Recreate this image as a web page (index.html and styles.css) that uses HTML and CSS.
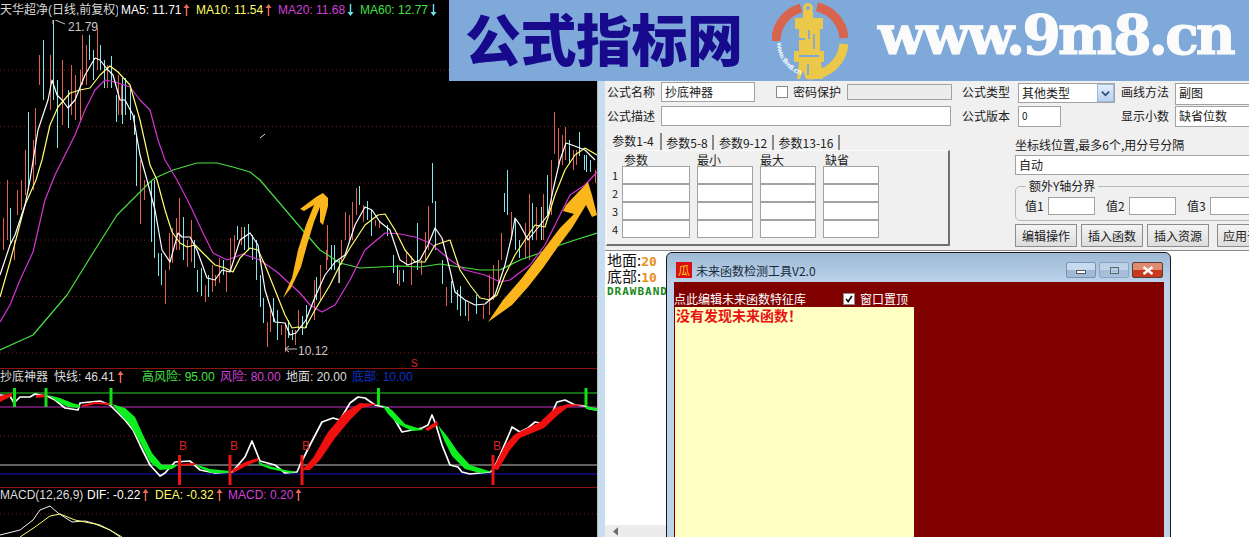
FILE: index.html
```html
<!DOCTYPE html>
<html lang="zh">
<head>
<meta charset="utf-8">
<title>公式指标网</title>
<link rel="stylesheet" href="styles.css">
</head>
<body>
<div class="screen">
  <section class="chart">
    <div class="panel panel-main">
      <div class="legend legend-main">
        <span class="lg w118">天华超净(日线,前复权)</span>
        <span class="lg c-white ml3 w75">MA5: 11.71<svg class="ar" viewBox="0 0 7 12"><path class="up" d="M3.5 0 6.5 4H4.2V12H2.8V4H.5Z"/></svg></span>
        <span class="lg c-yellow w82">MA10: 11.54<svg class="ar" viewBox="0 0 7 12"><path class="up" d="M3.5 0 6.5 4H4.2V12H2.8V4H.5Z"/></svg></span>
        <span class="lg c-magenta w82">MA20: 11.68<svg class="ar dn" viewBox="0 0 7 12"><path class="down" d="M3.5 12 6.5 8H4.2V0H2.8V8H.5Z"/></svg></span>
        <span class="lg c-green">MA60: 12.77<svg class="ar dn" viewBox="0 0 7 12"><path class="down" d="M3.5 12 6.5 8H4.2V0H2.8V8H.5Z"/></svg></span>
      </div>
      <svg class="plot plot-main" viewBox="0 20 597 348">
        <path class="grid" d="M0 70H597M0 126.500H597M0 183H597M0 240H597M0 296.500H597M0 353H597"/>
        <path class="wick-c" d="M28 112V190M43 40V100M53 19V100M57 80V148M68 90V128M89 35V60M93 50V80M100 45V70M104 60V88M111 56V88M116 95V122M122 78V124M125 78V115M130 85V120M134 115V135M136 135V186M10 208V243M151 180V242M154 180V258M158 253V276M161 253V285M183 217V260M194 240V268M197 270V292M201 268V296M208 275V297M223 260V275M237 226V240M244 227V250M248 224V250M252 235V260M256 240V280M260 275V307M263 298V323M273 298V322M277 310V340M288 320V338M292 330V340M302 316V335M306 305V328M316 277V300M331 245V270M334 245V270M339 260V283M359 186V205M367 201V220M371 210V236M387 225V236M393 255V273M397 265V284M403 270V282M417 223V270M432 163V203M435 201V250M442 260V284M451 281V303M457 290V310M460 286V316M465 300V316M476 295V314M504 193V212M507 170V215M515 220V250M519 240V258M532 203V240M541 207V240M547 175V215M569 140V164M579 132V156M584 155V170M586 155V172M590 160V172"/>
        <path class="wick-r" d="M25 150V195M33 140V190M35 108V165M39 55V85M50 55V110M62 60V125M71 65V115M75 75V120M80 70V120M82 35V85M86 45V85M97 28V70M107 65V88M118 75V115M121 85V115M140 160V224M144 180V200M3 218V250M7 180V240M14 240V260M17 190V215M21 180V210M165 270V304M169 233V270M172 228V263M176 218V250M179 198V250M187 240V267M191 220V262M205 285V302M212 265V292M215 275V286M219 258V283M226 270V292M230 238V272M234 235V255M241 227V245M267 322V347M270 310V332M281 325V335M285 325V352M295 330V345M298 310V330M314 280V320M320 265V300M326 250V270M327 225V260M338 268V283M341 240V265M345 212V240M349 215V240M352 202V240M356 188V215M363 205V222M375 220V226M379 222V228M399 270V286M406 252V266M411 256V285M421 260V275M425 232V260M428 206V250M446 287V306M468 303V321M483 305V319M489 275V315M493 265V300M498 260V285M501 233V260M511 212V240M525 223V258M529 194V260M536 207V240M543 194V240M551 160V215M554 112V154M558 128V165M562 135V165M565 127V160M573 150V170M576 150V165M595 170V183"/>
        <polyline class="ln ln-green" points="0,350 33,335 67,295 93,253 117,215 150,182 155,178 173,170 197,163 217,163 233,167 250,172 260,180 300,227 320,250 340,263 360,268 380,267 400,266 420,267 440,264 460,267 480,270 500,270 520,260 540,253 560,245 575,240 597,233"/>
        <polyline class="ln ln-magenta" points="0,322 10,305 20,280 33,252 45,200 55,175 65,155 75,135 85,110 95,90 105,80 115,82 130,87 140,100 150,110 158,140 165,160 177,180 190,205 203,233 213,253 227,260 243,254 260,260 277,272 300,293 310,305 322,312 335,305 350,280 365,250 385,233 400,234 415,237 430,243 450,260 465,270 485,275 500,282 510,280 530,265 545,245 560,215 570,195 585,185 597,172"/>
        <polyline class="ln ln-yellow" points="0,297 10,262 25,205 36,180 42,160 50,125 58,107 70,93 80,90 90,88 100,75 110,66 118,72 130,85 140,120 150,165 157,180 165,210 172,232 180,243 187,247 195,245 205,255 215,265 225,268 233,272 240,258 250,248 258,250 265,265 275,290 285,315 292,328 298,327 305,328 315,310 330,285 340,265 350,248 365,225 378,215 385,214 395,230 405,250 415,262 425,262 435,245 450,240 460,270 470,285 480,298 490,300 497,295 505,275 515,255 525,240 535,225 545,227 555,195 565,170 575,155 585,148 597,155"/>
        <polyline class="ln ln-white" points="0,275 10,245 15,235 25,205 30,180 38,130 48,100 52,80 57,95 62,100 68,108 75,100 85,75 95,58 100,60 108,70 113,75 120,100 125,100 133,115 140,155 147,180 155,210 162,250 170,262 178,233 182,237 190,237 197,250 207,278 215,280 222,270 230,272 240,240 250,233 258,245 265,290 275,322 285,323 290,335 296,333 306,320 315,297 325,275 335,262 345,255 355,225 365,207 372,210 380,222 390,230 400,260 408,265 420,260 428,245 435,228 442,238 450,270 455,292 465,300 475,305 485,304 495,295 505,265 512,235 515,218 520,225 528,240 540,225 548,215 553,190 560,160 566,143 572,145 585,150 595,160"/>
        <path class="tick" d="M260 138 265 134"/>
        <polygon class="brush" points="283,298 292,278 298,250 306,225 314,205 304,211 300,209 316,197 323,193 328,198 328,206 323,225 320,222 320,207 314,222 307,245 301,267 291,288"/>
        <polygon class="brush" points="488,322 503,300 522,278 541,253 560,228 574,214 563,211 566,205 588,182 592,195 597,215 592,217 586,205 572,228 557,248 543,268 528,287 512,305"/>
        <path class="note" d="M53 19V24M53 19 65 24M285 349H297M285 349 289 346M285 349 289 352"/>
        <text class="val" x="68" y="31">21.79</text>
        <text class="val" x="298" y="355">10.12</text>
        <text class="sig-s" x="411" y="367">S</text>
      </svg>
    </div>
    <div class="panel panel-kd">
      <div class="legend legend-kd">
        <span class="lg c-pale">抄底神器</span>
        <span class="lg c-pale ml6 w88">快线: 46.41<svg class="ar" viewBox="0 0 7 12"><path class="up" d="M3.5 0 6.500 4H4.200V12H2.800V4H.5Z"/></svg></span>
        <span class="lg c-green w78">高风险: 95.00</span>
        <span class="lg c-magenta w66">风险: 80.00</span>
        <span class="lg c-pale w66">地面: 20.00</span>
        <span class="lg c-blue">底部: 10.00</span>
      </div>
      <svg class="plot plot-kd" viewBox="0 388 597 99">
        <path class="lv lv-green" d="M0 393H597"/>
        <path class="lv lv-magenta" d="M0 407H597"/>
        <path class="grid" d="M0 436H597"/>
        <path class="lv lv-grey" d="M0 465H597"/>
        <path class="lv lv-blue" d="M0 474H597"/>
        <polyline class="kd-w" points="0,395 10,396 14,403 20,397 30,397 35,394 47,396 55,400 65,408 78,410 80,403 90,402 100,401 110,405 118,413 125,420 133,430 140,445 150,465 160,476 165,473 175,462 190,461 200,470 215,473 232,472 245,457 252,441 260,461 275,465 285,473 297,472 300,465 310,445 322,422 333,418 340,420 350,403 358,397 365,398 375,405 388,408 395,420 402,432 412,430 422,428 428,425 432,415 436,425 442,445 450,465 458,467 462,472 470,474 490,472 493,470 500,455 510,432 512,427 520,432 528,428 535,422 545,424 552,413 557,402 565,400 575,405 585,406 590,409 597,410"/>
        <polygon class="kd-g" points="48,395 60,398 72,403 80,405 79,408 68,407 58,402"/>
        <polygon class="kd-g" points="112,404 125,408 135,417 143,435 152,453 162,465 178,465 172,469 160,470 150,462 140,442 130,425 120,414"/>
        <polygon class="kd-g" points="195,464 210,469 230,471 230,473 212,473 200,468"/>
        <polygon class="kd-g" points="258,461 265,465 285,470 297,472 290,473 270,469 260,465"/>
        <polygon class="kd-g" points="382,405 392,410 405,424 424,430 412,431 398,424 388,414"/>
        <polygon class="kd-g" points="438,425 447,436 458,452 470,465 492,472 480,473 465,469 452,456 444,440"/>
        <polygon class="kd-g" points="586,406 597,408 597,411 586,409"/>
        <polygon class="kd-r" points="0,396 12,393 12,396 0,402"/>
        <polygon class="kd-r" points="36,395 47,394 47,397 36,398"/>
        <polyline class="kd-rl" points="82,406 95,403 110,404"/>
        <polyline class="kd-rl" points="178,465 195,464"/>
        <polygon class="kd-r" points="232,470 245,462 258,458 258,461 248,465 233,473"/>
        <polygon class="kd-r" points="302,470 313,458 328,432 345,412 360,403 378,404 362,408 350,420 335,438 320,460 310,470"/>
        <polygon class="kd-r" points="425,429 437,421 438,425 428,431"/>
        <polygon class="kd-r" points="493,469 505,445 515,434 540,422 555,408 568,404 585,405 568,407 558,415 544,428 520,438 510,450 498,470"/>
        <path class="bar-g" d="M14.500 388V407M46 388V407M111 388V405M378.500 388V405M586 388V406"/>
        <path class="bar-r" d="M179.500 455V485M230 455V485M302 455V485M493 455V485"/>
        <text class="sig-b" x="183" y="450">B</text>
        <text class="sig-b" x="234" y="450">B</text>
        <text class="sig-b" x="306" y="450">B</text>
        <text class="sig-b" x="497" y="450">B</text>
      </svg>
    </div>
    <div class="panel panel-macd">
      <div class="legend legend-macd">
        <span class="lg c-pale w87">MACD(12,26,9)</span>
        <span class="lg c-white w68">DIF: -0.22<svg class="ar" viewBox="0 0 7 12"><path class="up" d="M3.5 0 6.500 4H4.200V12H2.800V4H.5Z"/></svg></span>
        <span class="lg c-yellow w73">DEA: -0.32<svg class="ar" viewBox="0 0 7 12"><path class="up" d="M3.5 0 6.500 4H4.200V12H2.800V4H.5Z"/></svg></span>
        <span class="lg c-magenta">MACD: 0.20<svg class="ar" viewBox="0 0 7 12"><path class="up" d="M3.5 0 6.500 4H4.200V12H2.800V4H.5Z"/></svg></span>
      </div>
      <svg class="plot plot-macd" viewBox="0 503 597 34">
        <path class="grid" d="M0 514H597"/>
        <polyline class="ln-thin-w" points="0,535 20,530 33,520 40,510 50,506 58,513 72,522 85,521 100,525 110,530 120,537"/>
        <polyline class="ln-thin-y" points="20,537 35,527 50,516 60,514 75,520 95,524 110,530 122,537"/>
      </svg>
    </div>
  </section>

  <section class="dialog">
    <div class="form">
      <div class="pane-left">
        <div class="row row-a">
          <span class="lb w54">公式名称</span>
          <div class="fld w94 h20">抄底神器</div>
          <span class="chk ml21"></span>
          <span class="lb ml5">密码保护</span>
          <div class="fld fld-off w105 h16 ml6"></div>
        </div>
        <div class="row row-b">
          <span class="lb w54">公式描述</span>
          <div class="fld w290 h20"></div>
        </div>
        <div class="tabs">
          <div class="tab tab-on t56">参数1-4</div>
          <div class="tab t52">参数5-8</div>
          <div class="tab t54">参数9-12</div>
          <div class="tab t66">参数13-16</div>
        </div>
        <div class="params">
          <div class="p-head">
            <span></span><span class="ph1">参数</span><span>最小</span><span>最大</span><span class="ph4">缺省</span>
          </div>
          <div class="p-grid">
            <span class="num">1</span><div class="fld"></div><div class="fld"></div><div class="fld"></div><div class="fld"></div>
            <span class="num">2</span><div class="fld"></div><div class="fld"></div><div class="fld"></div><div class="fld"></div>
            <span class="num">3</span><div class="fld"></div><div class="fld"></div><div class="fld"></div><div class="fld"></div>
            <span class="num">4</span><div class="fld"></div><div class="fld"></div><div class="fld"></div><div class="fld"></div>
          </div>
        </div>
      </div>
      <div class="pane-right">
        <div class="row row-c">
          <span class="lb lb-t18 w56">公式类型</span>
          <div class="fld w97 h20 sel">其他类型<span class="sel-btn"><svg viewBox="0 0 10 7" class="chev"><path d="M1 1.500 5 5.500 9 1.500"/></svg></span></div>
          <span class="lb lb-t18 ml6 w54">画线方法</span>
          <div class="fld w80 h22">副图</div>
        </div>
        <div class="row row-d">
          <span class="lb lb-t20 w56">公式版本</span>
          <div class="fld w43 h21 txt-sm">0</div>
          <span class="lb lb-t20 ml60 w54">显示小数</span>
          <div class="fld w80 h21">缺省位数</div>
        </div>
        <div class="axis-lb lb">坐标线位置,最多6个,用分号分隔</div>
        <div class="fld axis-fld h20">自动</div>
        <fieldset class="group">
          <legend class="lg-title">额外Y轴分界</legend>
          <div class="group-row">
            <span class="lb w23">值1</span><div class="fld w47 h18"></div>
            <span class="lb w23 ml11">值2</span><div class="fld w47 h18"></div>
            <span class="lb w23 ml11">值3</span><div class="fld w47 h18"></div>
          </div>
        </fieldset>
        <div class="btns">
          <div class="btn">编辑操作</div>
          <div class="btn">插入函数</div>
          <div class="btn">插入资源</div>
          <div class="btn btn-apply">应用于公式</div>
        </div>
      </div>
    </div>
    <div class="lower">
      <div class="code">
        <div class="code-l">地面:<b class="mono-o">20</b></div>
        <div class="code-l">底部:<b class="mono-o">10</b></div>
        <div class="code-g">DRAWBAND</div>
      </div>
      <div class="hscroll"><svg class="sc-ar" viewBox="0 0 6 10"><path d="M6 0V10L0 5Z"/></svg></div>
    </div>
  </section>

  <header class="banner">
    <div class="b-title">公式指标网</div>
    <svg class="b-logo" viewBox="0 0 76 80">
      <path class="lg-red" d="M4 40A34 34 0 0 1 29 7"/>
      <path class="lg-red" d="M45 6A34 34 0 0 1 72 37"/>
      <path class="lg-yel" d="M72 43A34 34 0 0 1 36 74"/>
      <circle class="lg-ring" cx="36" cy="7" r="3.500"/>
      <path class="lg-body" d="M31 10H41V17H51V28H48V50H52V61H49L51 78H34L31 70 28 78H25L27 61H22V50H27V28H23V17H31Z"/>
      <path class="lg-cut" d="M37 29V38M23 38H33M42 33V48M27 55H47M36 63V74"/>
      <path id="logoArc" class="lg-none" d="M5 42A34 34 0 0 0 34 75"/>
      <text class="lg-text"><textPath href="#logoArc">www.9m8.cn</textPath></text>
    </svg>
    <div class="b-url">www.9m8.cn</div>
  </header>

  <aside class="tool">
    <div class="tool-bar">
      <span class="tool-ico">瓜</span>
      <span class="tool-title">未来函数检测工具V2.0</span>
      <div class="tool-ctl">
        <span class="wbtn"><span class="w-min"></span></span>
        <span class="wbtn wbtn-dim"><span class="w-max"></span></span>
        <span class="wbtn wbtn-x"><svg class="w-x" viewBox="0 0 12 9"><path d="M1.500 1 10.500 8M10.500 1 1.500 8"/></svg></span>
      </div>
    </div>
    <div class="tool-body">
      <div class="tool-top">
        <span class="tool-lb">点此编辑未来函数特征库</span>
        <span class="chk chk-on"><svg viewBox="0 0 12 12"><path d="M2.500 6 5 9 9.500 2.500"/></svg></span>
        <span class="tool-lb ml5">窗口置顶</span>
      </div>
      <div class="tool-memo">没有发现未来函数！</div>
    </div>
  </aside>
</div>
</body>
</html>
```
FILE: styles.css
```css
* { box-sizing: border-box; }
html, body { margin: 0; padding: 0; background: #000; }
body { font-family: "Noto Sans CJK SC", "Liberation Sans", sans-serif; }
.screen { position: relative; width: 1249px; height: 537px; overflow: hidden; display: grid; grid-template-columns: 598px 651px; }

/* chart */
.chart { background: #000; height: 537px; display: flex; flex-direction: column; border-right: 1px solid #b9b9b9; overflow: hidden; }
.panel { flex: none; }
.panel-kd, .panel-macd { border-top: 1px solid #8c1414; }
.panel-main { height: 368px; }
.panel-kd { height: 119px; }
.panel-macd { height: 50px; }
.legend { display: flex; align-items: center; white-space: nowrap; font: 12px/14px "Liberation Sans", "Noto Sans CJK SC", sans-serif; color: #d8d8d8; }
.legend-main { height: 20px; }
.legend-kd { height: 19px; padding-bottom: 3px; }
.legend-macd { height: 15px; padding-bottom: 2px; }
.lg { display: inline-flex; align-items: center; flex: none; }
.w118 { width: 118px; overflow: hidden; }
.w75 { width: 75px; } .w82 { width: 82px; } .w88 { width: 88px; } .w78 { width: 78px; } .w66 { width: 66px; } .w87 { width: 87px; } .w68 { width: 68px; } .w73 { width: 73px; }
.ml3 { margin-left: 3px; } .ml5 { margin-left: 5px; } .ml6 { margin-left: 6px; } .ml11 { margin-left: 11px; } .ml21 { margin-left: 21px; } .ml60 { margin-left: 60px; }
.c-white { color: #fff; } .c-yellow { color: #ffff66; } .c-magenta { color: #d040d8; } .c-green { color: #44e044; } .c-pale { color: #dcdcdc; } .c-blue { color: #1030c8; }
.ar { width: 7px; height: 12px; margin-left: 2px; }
.up { fill: #ee6a5a; }
.down { fill: #70e4ea; }
.plot { display: block; width: 597px; }
.plot-main { height: 348px; }
.plot-kd { height: 99px; }
.plot-macd { height: 34px; }
.grid { fill: none; stroke: #7a1c14; stroke-width: 1; stroke-dasharray: 1 3; }
.wick-c { fill: none; stroke: #80e6ee; stroke-width: 1; shape-rendering: crispEdges; }
.wick-r { fill: none; stroke: #e0604e; stroke-width: 1; shape-rendering: crispEdges; }
.ln { fill: none; stroke-width: 1.200; stroke-linejoin: round; }
.ln-green { stroke: #4ade42; }
.ln-magenta { stroke: #d434d4; }
.ln-yellow { stroke: #ffff70; }
.ln-white { stroke: #fff; }
.tick { stroke: #ddd; stroke-width: 1; fill: none; }
.brush { fill: #fbb61c; }
.note { fill: none; stroke: #c8c8c8; stroke-width: 1; }
.val { font: 12px "Liberation Sans", sans-serif; fill: #c8c8c8; }
.sig-s { font: 10px "Liberation Sans", sans-serif; fill: #e02020; }
.sig-b { font: 12px "Liberation Sans", sans-serif; fill: #d82020; text-anchor: middle; }
.lv { fill: none; stroke-width: 1; }
.lv-green { stroke: #2fd02f; }
.lv-magenta { stroke: #c030c0; }
.lv-grey { stroke: #c0c0c0; }
.lv-blue { stroke: #1414d0; }
.kd-w { fill: none; stroke: #fff; stroke-width: 1.700; stroke-linejoin: round; }
.kd-g { fill: #0cf020; }
.kd-r { fill: #f01010; }
.kd-rl { fill: none; stroke: #f01010; stroke-width: 2; }
.bar-g { fill: none; stroke: #12e012; stroke-width: 3; }
.bar-r { fill: none; stroke: #ee1414; stroke-width: 3; }
.ln-thin-w { fill: none; stroke: #f4f4f4; stroke-width: 1; }
.ln-thin-y { fill: none; stroke: #ffff70; stroke-width: 1; }

/* formula dialog */
.dialog { height: 537px; display: flex; flex-direction: column; background: #f0f0f0; border-left: 7px solid #c8dcf0; color: #202020; overflow: hidden; }
.form { flex: none; height: 169px; margin-top: 81px; display: flex; }
.pane-left { flex: none; width: 348px; padding-left: 2px; }
.pane-right { flex: none; width: 296px; padding-left: 9px; }
.row { display: flex; align-items: center; white-space: nowrap; }
.row-a { margin-top: 1px; height: 20px; }
.row-b { margin-top: 4px; height: 20px; }
.row-c { margin-top: 2px; height: 22px; align-items: flex-start; }
.row-d { margin-top: 1px; height: 21px; align-items: flex-start; }
.lb { font-size: 12px; line-height: 14px; flex: none; white-space: nowrap; }
.lb-t18 { line-height: 18px; }
.lb-t20 { line-height: 20px; }
.w23 { width: 23px; } .w43 { width: 43px; } .w47 { width: 47px; } .w54 { width: 54px; } .w56 { width: 56px; } .w80 { width: 80px; } .w94 { width: 94px; } .w97 { width: 97px; } .w105 { width: 105px; } .w290 { width: 290px; }
.h16 { height: 16px; } .h18 { height: 18px; } .h20 { height: 20px; } .h21 { height: 21px; } .h22 { height: 22px; }
.fld { flex: none; background: #fff; border: 1px solid #a2a2a2; font-size: 12px; line-height: 18px; padding-left: 3px; white-space: nowrap; overflow: hidden; }
.fld-off { background: #ececec; }
.txt-sm { font-size: 10px; }
.chk { flex: none; display: inline-block; width: 12px; height: 12px; background: #fff; border: 1px solid #8a8a8a; }
.sel { position: relative; }
.sel-btn { position: absolute; right: 0; top: 0; bottom: 0; width: 17px; background: linear-gradient(#e4eefb, #b9d0ee); border: 1px solid #9db8dc; display: flex; align-items: center; justify-content: center; }
.chev { width: 9px; height: 7px; }
.chev path { fill: none; stroke: #2a4a78; stroke-width: 2; }
.tabs { display: flex; align-items: flex-end; margin: 7px 0 0 -1px; height: 17px; }
.tab { flex: none; height: 15px; font-size: 12px; line-height: 15px; text-align: center; border-right: 2px solid #8a8a8a; white-space: nowrap; }
.tab-on { height: 17px; }
.t56 { width: 56px; } .t52 { width: 52px; } .t54 { width: 60px; } .t66 { width: 66px; }
.params { margin-left: -1px; width: 344px; height: 96px; border: 1px solid #fafafa; border-right: 2px solid #707070; border-bottom: 2px solid #707070; }
.p-head, .p-grid { display: grid; grid-template-columns: 8px 68px 56px 56px 56px; column-gap: 7px; }
.p-head { height: 15px; overflow: hidden; font-size: 12px; line-height: 18px; }
.ph1 { padding-left: 2px; }
.ph4 { padding-left: 2px; }
.p-grid { grid-auto-rows: 18px; }
.p-grid .fld { height: 18px; }
.num { padding-left: 5px; font-size: 11px; line-height: 18px; }
.axis-lb { margin: 11px 0 0 53px; }
.axis-fld { margin: 3px 0 0 53px; width: 300px; }
.group { margin: 4px 0 0 53px; padding: 0; width: 300px; height: 42px; border: 1px solid #b8b8b8; border-radius: 5px; }
.lg-title { margin-left: 10px; padding: 0 3px; font-size: 12px; line-height: 14px; }
.group-row { display: flex; align-items: center; margin-top: 4px; padding-left: 9px; white-space: nowrap; }
.btns { display: flex; gap: 4px; margin: 3px 0 0 53px; width: 300px; }
.btn { flex: none; width: 62px; height: 23px; background: linear-gradient(#f4f4f4, #dcdcdc); border: 1px solid #8c8c8c; font-size: 12px; line-height: 21px; text-align: center; white-space: nowrap; overflow: hidden; }
.btn-apply { margin-left: 4px; width: 80px; text-align: left; padding-left: 5px; }
.lower { flex: 1; background: #fff; border-top: 1px solid #8a8a8a; display: flex; flex-direction: column; justify-content: space-between; }
.code { padding: 2px 0 0 2px; white-space: nowrap; }
.code-l { font-size: 15px; line-height: 14px; color: #111; }
.mono-o { font: bold 13px "DejaVu Sans Mono", monospace; color: #e89020; }
.code-g { font: bold 11px/13px "DejaVu Sans Mono", monospace; color: #1a8a1a; letter-spacing: 1px; }
.hscroll { height: 12px; width: 61px; background: #ececec; display: flex; align-items: center; padding-left: 8px; }
.sc-ar { width: 5px; height: 9px; fill: #6a6a6a; }

/* banner */
.banner { position: absolute; left: 449px; top: 0; width: 800px; height: 81px; background: #7ea9d8; display: flex; align-items: center; padding-left: 16px; }
.b-title { flex: none; width: 277px; margin-top: -8px; font-size: 56px; font-weight: 900; letter-spacing: -.5px; line-height: 60px; color: #180a8c; white-space: nowrap; }
.b-logo { flex: none; width: 76px; height: 80px; margin-left: 30px; }
.lg-red, .lg-yel { fill: none; stroke-width: 9; }
.lg-red { stroke: #d8644e; }
.lg-yel { stroke: #ecc84a; }
.lg-ring { fill: none; stroke: #ecc84a; stroke-width: 3; }
.lg-body { fill: #ecc84a; }
.lg-cut { fill: none; stroke: #7ea9d8; stroke-width: 1.800; }
.lg-none { fill: none; }
.lg-text { font: bold 7px "Liberation Sans", sans-serif; fill: #fff; }
.b-url { flex: none; margin-left: 30px; width: 358px; font: 900 55px/60px "DejaVu Serif", serif; letter-spacing: -2.800px; -webkit-text-stroke: 1.200px #fbfbfb; color: #fbfbfb; white-space: nowrap; margin-top: -12px; }

/* tool window */
.tool { position: absolute; left: 666px; top: 252px; width: 505px; height: 300px; border: 1px solid #1a1a1a; border-radius: 6px 6px 0 0; background: linear-gradient(#9fbad6, #bcd3ea 30px); padding: 0 6px 0 7px; }
.tool-bar { display: flex; align-items: flex-start; height: 29px; padding: 9px 1px 0 2px; }
.tool-ico { flex: none; width: 16px; height: 16px; background: #d81010; color: #ffc820; font-size: 12px; line-height: 16px; text-align: center; }
.tool-title { margin-left: 4px; font-size: 12px; line-height: 17px; color: #1a2a3a; white-space: nowrap; }
.tool-ctl { margin-left: auto; display: flex; gap: 3px; }
.wbtn { flex: none; width: 30px; height: 16px; border: 1px solid #7b93b3; border-radius: 2px; background: linear-gradient(#c8daee 50%, #9fb9d6 50%); display: flex; align-items: center; justify-content: center; }
.wbtn-dim { opacity: .65; }
.wbtn-x { width: 31px; border-color: #5a3a3a; background: linear-gradient(#e08a70 50%, #c73a20 50%); }
.w-min { display: block; width: 10px; height: 4px; background: #fff; border: 1px solid #556; margin-top: 3px; }
.w-max { display: block; width: 9px; height: 7px; border: 1px solid #333; box-shadow: inset 0 0 0 1px #c0d0e0; }
.w-x { width: 12px; height: 9px; }
.w-x path { fill: none; stroke: #fff; stroke-width: 2.500; }
.tool-body { background: #800000; height: 260px; }
.tool-top { display: flex; align-items: center; height: 25px; padding-top: 8px; white-space: nowrap; }
.tool-lb { font-size: 12px; line-height: 14px; color: #fff; flex: none; }
.tool-lb:first-child { width: 169px; }
.chk-on { background: #fff; display: flex; }
.chk-on svg { display: block; width: 10px; height: 10px; }
.chk-on path { fill: none; stroke: #111; stroke-width: 2; }
.tool-memo { margin-left: 1px; width: 239px; height: 235px; background: #ffffc4; color: #e81414; font: bold 14px/17px "Noto Sans CJK SC", sans-serif; padding-left: 1px; white-space: nowrap; }
```
